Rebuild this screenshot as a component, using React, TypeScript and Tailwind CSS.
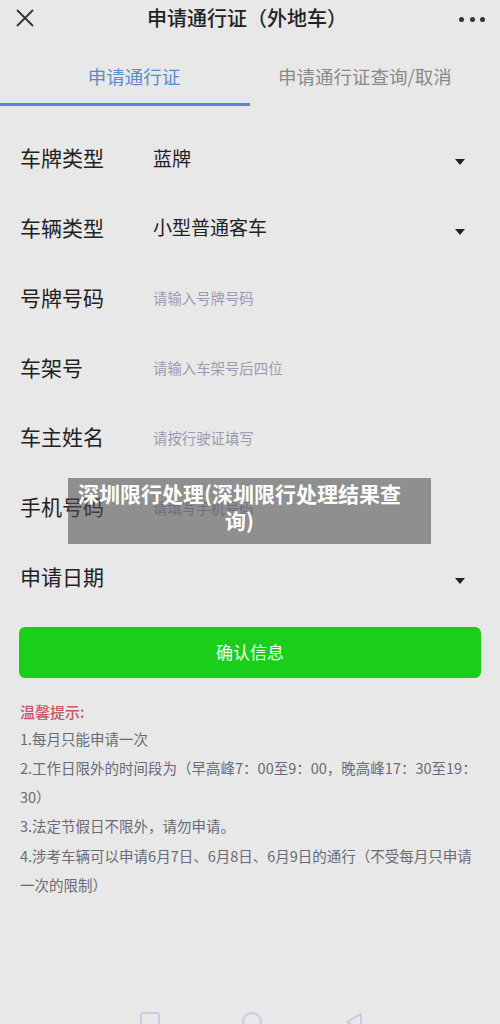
const FONT = "font-['Noto_Sans_CJK_SC','Noto_Sans',sans-serif]";

function Caret() {
  return (
    <svg width="12" height="8" viewBox="0 0 12 8" className="mt-[8px]">
      <path d="M1 1 L11 1 L6 7 Z" fill="#222" />
    </svg>
  );
}

type Row = { label: string; value?: string; placeholder?: string; select?: boolean };

const rows: Row[] = [
  { label: '车牌类型', value: '蓝牌', select: true },
  { label: '车辆类型', value: '小型普通客车', select: true },
  { label: '号牌号码', placeholder: '请输入号牌号码' },
  { label: '车架号', placeholder: '请输入车架号后四位' },
  { label: '车主姓名', placeholder: '请按行驶证填写' },
  { label: '手机号码', placeholder: '请填写手机号码' },
  { label: '申请日期', select: true },
];

const tips = [
  '1.每月只能申请一次',
  '2.工作日限外的时间段为（早高峰7：00至9：00，晚高峰17：30至19：',
  '30）',
  '3.法定节假日不限外，请勿申请。',
  '4.涉考车辆可以申请6月7日、6月8日、6月9日的通行（不受每月只申请',
  '一次的限制）',
];

export default function App() {
  return (
    <div className={`relative flex h-[1024px] w-full flex-col overflow-hidden bg-[#e8e8e8] ${FONT}`}>
      {/* 顶部标题栏 */}
      <div className="flex h-[36px] items-center justify-between px-[15px]">
        <svg width="20" height="20" viewBox="0 0 20 20">
          <path d="M2 2 L18 18 M18 2 L2 18" stroke="#333" strokeWidth="1.8" />
        </svg>
        <div className="text-[20px] font-medium text-[#222]">申请通行证（外地车）</div>
        <div className="flex w-[26px] items-center justify-between pt-[2px]">
          <span className="h-[5px] w-[5px] rounded-full bg-[#333]" />
          <span className="h-[5px] w-[5px] rounded-full bg-[#333]" />
          <span className="h-[5px] w-[5px] rounded-full bg-[#333]" />
        </div>
      </div>

      {/* 选项卡 */}
      <div className="flex h-[70px]">
        <div className="flex w-1/2 flex-col">
          <div className="flex flex-1 items-start justify-center pl-[18px] pt-[27px] text-[18.5px] leading-[26px] text-[#5a8dc8]">
            申请通行证
          </div>
          <div className="h-[3px] bg-[#4a8ae0]" />
        </div>
        <div className="flex w-1/2 items-start justify-center pr-[20px] pt-[27px] text-[18.5px] leading-[26px] text-[#8a8a8a]">
          申请通行证查询/取消
        </div>
      </div>

      {/* 表单 */}
      <div className="mt-[17px] flex flex-col">
        {rows.map((r) => (
          <div key={r.label} className="flex h-[69.8px] items-center pl-[20px] pr-[34px]">
            <div className="w-[133px] text-[21px] text-[#222]">{r.label}</div>
            <div className="flex-1">
              {r.value && <span className="text-[19px] text-[#222]">{r.value}</span>}
              {r.placeholder && <span className="text-[14.4px] text-[#9b9bb0]">{r.placeholder}</span>}
            </div>
            {r.select && <Caret />}
          </div>
        ))}
      </div>

      {/* 按钮 */}
      <div className="mt-[15px] px-[19px]">
        <button
          type="button"
          className="flex h-[51px] w-full items-center justify-center rounded-[6px] bg-[#19cf19] text-[17px] text-white"
        >
          确认信息
        </button>
      </div>

      {/* 温馨提示 */}
      <div className="mt-[19px] px-[20px]">
        <div className="text-[15px] font-medium leading-[30px] text-[#c9556a]">温馨提示:</div>
        <div className="mt-[-3px] flex flex-col text-[14.5px] leading-[29.3px] text-[#6a6a78]">
          {tips.map((t) => (
            <div key={t} className="whitespace-nowrap">
              {t}
            </div>
          ))}
        </div>
      </div>

      {/* 底部导航 */}
      <div className="mt-auto flex h-[12px] items-start justify-center gap-[82px] pl-[4px]">
        <div className="h-[20px] w-[20px] rounded-[3px] border-2 border-[#c9cce8]" />
        <div className="h-[20px] w-[20px] rounded-full border-2 border-[#c9cce8]" />
        <svg width="20" height="20" viewBox="0 0 20 20">
          <path d="M17 2 L3 10 L17 18 Z" fill="none" stroke="#c9cce8" strokeWidth="2" strokeLinejoin="round" />
        </svg>
      </div>

      {/* 水印遮罩 */}
      <div className="absolute left-[68px] top-[478px] flex h-[66px] w-[363px] items-start justify-center bg-[rgba(80,80,80,0.58)] pl-[8px] pr-[28px] pt-[2px] text-center text-[21px] font-bold leading-[27px] text-white">
        深圳限行处理(深圳限行处理结果查询)
      </div>
    </div>
  );
}
